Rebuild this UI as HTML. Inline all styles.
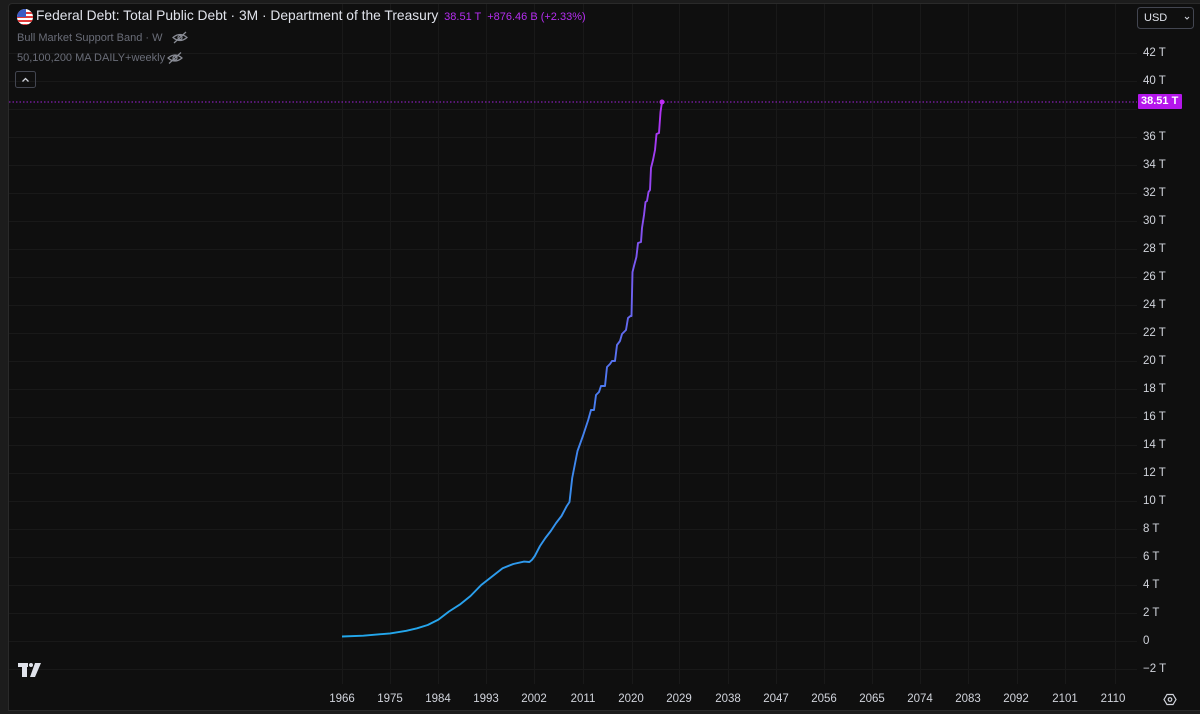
<!DOCTYPE html>
<html><head><meta charset="utf-8"><style>
body{margin:0;width:1200px;height:714px;background:#1c1c1c;overflow:hidden;font-family:"Liberation Sans",sans-serif}
#c{position:absolute;left:8px;top:3px;width:1192px;height:707px;background:#0f0f0f;border-left:1px solid #2a2a2a;border-top:1px solid #2a2a2a;border-radius:4px 0 0 0}
.t{position:absolute;white-space:nowrap}
.yl{position:absolute;left:1143px;font-size:11.5px;color:#d1d4dc}
.xl{position:absolute;top:693px;font-size:11.5px;color:#d1d4dc;transform:translateX(-50%)}
</style></head><body>
<div id="c"></div>
<svg width="1200" height="714" style="position:absolute;left:0;top:0">
<defs><linearGradient id="g" gradientUnits="userSpaceOnUse" x1="0" y1="640" x2="0" y2="100">
<stop offset="0" stop-color="#22a8ec"/><stop offset="0.45" stop-color="#4a7cf0"/><stop offset="1" stop-color="#b42ff2"/></linearGradient></defs>
<g stroke="#191919" stroke-width="1">
<line x1="9" y1="53.5" x2="1137" y2="53.5"/><line x1="9" y1="81.5" x2="1137" y2="81.5"/><line x1="9" y1="109.5" x2="1137" y2="109.5"/><line x1="9" y1="137.5" x2="1137" y2="137.5"/><line x1="9" y1="165.5" x2="1137" y2="165.5"/><line x1="9" y1="193.5" x2="1137" y2="193.5"/><line x1="9" y1="221.5" x2="1137" y2="221.5"/><line x1="9" y1="249.5" x2="1137" y2="249.5"/><line x1="9" y1="277.5" x2="1137" y2="277.5"/><line x1="9" y1="305.5" x2="1137" y2="305.5"/><line x1="9" y1="333.5" x2="1137" y2="333.5"/><line x1="9" y1="361.5" x2="1137" y2="361.5"/><line x1="9" y1="389.5" x2="1137" y2="389.5"/><line x1="9" y1="417.5" x2="1137" y2="417.5"/><line x1="9" y1="445.5" x2="1137" y2="445.5"/><line x1="9" y1="473.5" x2="1137" y2="473.5"/><line x1="9" y1="501.5" x2="1137" y2="501.5"/><line x1="9" y1="529.5" x2="1137" y2="529.5"/><line x1="9" y1="557.5" x2="1137" y2="557.5"/><line x1="9" y1="585.5" x2="1137" y2="585.5"/><line x1="9" y1="613.5" x2="1137" y2="613.5"/><line x1="9" y1="641.5" x2="1137" y2="641.5"/><line x1="9" y1="669.5" x2="1137" y2="669.5"/>
<line x1="342.5" y1="4" x2="342.5" y2="684"/><line x1="390.5" y1="4" x2="390.5" y2="684"/><line x1="438.5" y1="4" x2="438.5" y2="684"/><line x1="486.5" y1="4" x2="486.5" y2="684"/><line x1="534.5" y1="4" x2="534.5" y2="684"/><line x1="583.5" y1="4" x2="583.5" y2="684"/><line x1="632.5" y1="4" x2="632.5" y2="684"/><line x1="679.5" y1="4" x2="679.5" y2="684"/><line x1="728.5" y1="4" x2="728.5" y2="684"/><line x1="776.5" y1="4" x2="776.5" y2="684"/><line x1="824.5" y1="4" x2="824.5" y2="684"/><line x1="872.5" y1="4" x2="872.5" y2="684"/><line x1="920.5" y1="4" x2="920.5" y2="684"/><line x1="968.5" y1="4" x2="968.5" y2="684"/><line x1="1017.5" y1="4" x2="1017.5" y2="684"/><line x1="1065.5" y1="4" x2="1065.5" y2="684"/><line x1="1115.5" y1="4" x2="1115.5" y2="684"/>
</g>
<line x1="9" y1="102" x2="1137" y2="102" stroke="#a020d8" stroke-width="1" stroke-dasharray="1.5,2"/>
<polyline fill="none" stroke="url(#g)" stroke-width="1.9" stroke-linejoin="round" points="342,636.5 363.4,635.7 390.2,633.4 406.3,630.8 417,628.3 427.7,625 438.4,619.6 449,611.5 459.8,604.6 470.5,596 481.2,585 491.9,576.6 502.6,568.2 513.3,564 524.1,561.6 529.4,562 532,559.8 534.8,556 540,546 545.4,538 550.8,531 556.1,523 561.5,516 566.8,506 569.5,502 572.2,478 577.5,451 582.9,436 588.2,420 591,410 594,410 596,395 599,392 601,386 605,386 607,367 610,364 612,361 615,361 617,345 620,341 622,334 626,330 628,318 630.5,316 631.5,316 632.5,272 634,266 636.4,257 638,243 641,242 642,228 644,215 645.5,202 647,201 648.5,192 650,190 651,168 653,160 655,150 656.5,134 659,133 660.5,112 662,102"/>
<circle cx="662" cy="102" r="2.5" fill="#c02cf6"/>
<line x1="8" y1="710.5" x2="1200" y2="710.5" stroke="#2a2a2a"/>
<g transform="translate(16,8)"><circle cx="9" cy="9" r="8" fill="#fff"/><clipPath id="cc"><circle cx="9" cy="9" r="8"/></clipPath><g clip-path="url(#cc)"><rect x="0" y="4" width="18" height="2" fill="#e03a3a"/><rect x="0" y="8" width="18" height="2" fill="#e03a3a"/><rect x="0" y="12" width="18" height="2" fill="#e03a3a"/><rect x="0" y="16" width="18" height="2" fill="#e03a3a"/><rect x="0" y="0" width="10" height="9" fill="#3b5bc4"/></g></g>
<g fill="none" stroke="#8a8d96" stroke-width="1.2"><path d="M173,37.5 q7,-6 14,0 q-7,6 -14,0z"/><circle cx="180" cy="37.5" r="2"/><line x1="174" y1="43" x2="186" y2="32"/>
<path d="M168,58 q7,-6 14,0 q-7,6 -14,0z" transform="translate(0,0)"/></g>
<g fill="none" stroke="#8a8d96" stroke-width="1.2" transform="translate(0,0)"><circle cx="175" cy="58" r="2"/><line x1="169" y1="63.5" x2="181" y2="52.5"/></g>
<rect x="15.5" y="71.5" width="20" height="16" rx="2" fill="none" stroke="#434651"/>
<path d="M22.5,81.5 l3,-3 l3,3" fill="none" stroke="#d1d4dc" stroke-width="1.3"/>
<rect x="1137.5" y="7.5" width="56" height="21" rx="3" fill="none" stroke="#434651"/>
<path d="M1185,17 l2,2 l2,-2" fill="none" stroke="#d1d4dc" stroke-width="1"/>
<rect x="1138" y="94" width="44" height="15" rx="1" fill="#b516ec"/>
<g fill="#e0e3eb"><rect x="18" y="663" width="10" height="4"/><rect x="22" y="663" width="5" height="14"/><circle cx="31" cy="665" r="2"/><path d="M35,663 h6 l-6,14 h-5z"/></g>
<g fill="none" stroke="#d1d4dc" stroke-width="1.2"><path d="M1164,699.5 l3,-5 h6 l3,5 l-3,5 h-6z"/><circle cx="1170" cy="699.5" r="1.8"/></g>
</svg>
<div class="t" style="left:36px;top:8px;font-size:13.8px;color:#e0e3eb">Federal Debt: Total Public Debt · 3M · Department of the Treasury <span style="font-size:11px;color:#b52ef0;margin-left:2px">38.51 T &nbsp;+876.46 B (+2.33%)</span></div>
<div class="t" style="left:17px;top:32px;font-size:11px;color:#6a6d78">Bull Market Support Band · W</div>
<div class="t" style="left:17px;top:52px;font-size:11px;color:#6a6d78">50,100,200 MA DAILY+weekly</div>
<div class="t" style="left:1144px;top:12px;font-size:11px;color:#e0e3eb">USD</div>
<div class="yl" style="top:47px">42 T</div><div class="yl" style="top:75px">40 T</div>
<div class="yl" style="top:131px">36 T</div><div class="yl" style="top:159px">34 T</div><div class="yl" style="top:187px">32 T</div><div class="yl" style="top:215px">30 T</div><div class="yl" style="top:243px">28 T</div><div class="yl" style="top:271px">26 T</div><div class="yl" style="top:299px">24 T</div><div class="yl" style="top:327px">22 T</div><div class="yl" style="top:355px">20 T</div><div class="yl" style="top:383px">18 T</div><div class="yl" style="top:411px">16 T</div><div class="yl" style="top:439px">14 T</div><div class="yl" style="top:467px">12 T</div><div class="yl" style="top:495px">10 T</div><div class="yl" style="top:523px">8 T</div><div class="yl" style="top:551px">6 T</div><div class="yl" style="top:579px">4 T</div><div class="yl" style="top:607px">2 T</div><div class="yl" style="top:635px">0</div><div class="yl" style="top:663px">−2 T</div>
<div class="t" style="left:1141px;top:95px;font-size:11px;color:#fff;font-weight:bold">38.51 T</div>
<div class="xl" style="left:342px">1966</div><div class="xl" style="left:390px">1975</div><div class="xl" style="left:438px">1984</div><div class="xl" style="left:486px">1993</div><div class="xl" style="left:534px">2002</div><div class="xl" style="left:583px">2011</div><div class="xl" style="left:631px">2020</div><div class="xl" style="left:679px">2029</div><div class="xl" style="left:728px">2038</div><div class="xl" style="left:776px">2047</div><div class="xl" style="left:824px">2056</div><div class="xl" style="left:872px">2065</div><div class="xl" style="left:920px">2074</div><div class="xl" style="left:968px">2083</div><div class="xl" style="left:1016px">2092</div><div class="xl" style="left:1065px">2101</div><div class="xl" style="left:1113px">2110</div>
</body></html>
